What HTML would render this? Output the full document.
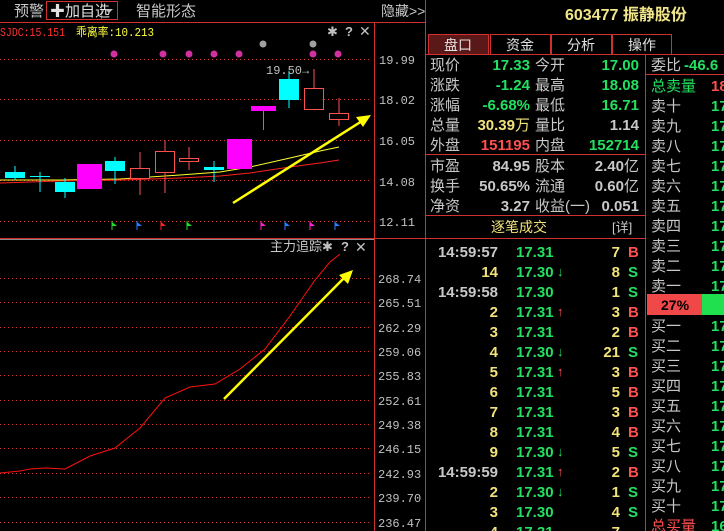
<!DOCTYPE html>
<html><head><meta charset="utf-8"><style>
html,body{margin:0;padding:0;background:#000;width:724px;height:531px;overflow:hidden}
svg{display:block}
text{font-family:"Liberation Sans","Noto Sans CJK SC",sans-serif}
.cn{font-family:"Liberation Sans","Noto Sans CJK SC",sans-serif;font-size:15px;fill:#c8c8c8}
.n{font-family:"Liberation Sans",sans-serif;font-weight:bold;font-size:15px}
.ax{font-family:"Liberation Mono",monospace;font-size:12px;fill:#c0c0c0}
.g{fill:#22e060}.y{fill:#f2e27a}.r{fill:#ff5050}.w{fill:#c8c8c8}
</style></head><body>
<svg width="724" height="531" viewBox="0 0 724 531" xmlns="http://www.w3.org/2000/svg">
<text x="14" y="16" class="cn">预警</text>
<rect x="46.5" y="1.5" width="71" height="18" fill="none" stroke="#d03030"/>
<line x1="101.5" y1="1" x2="101.5" y2="19" stroke="#d03030"/>
<text x="50" y="16" class="cn" style="fill:#e0e0e0">✚加自选</text>
<polygon points="105,9 113,9 109,13" fill="#c0c0c0"/>
<text x="136" y="16" class="cn">智能形态</text>
<text x="381" y="16" class="cn" style="font-size:14px">隐藏&gt;&gt;</text>
<line x1="0" y1="22.5" x2="425" y2="22.5" stroke="#d03030"/>
<line x1="374.5" y1="22" x2="374.5" y2="531" stroke="#d03030"/>
<line x1="0" y1="238.5" x2="374" y2="238.5" stroke="#d03030"/>
<line x1="0" y1="239.5" x2="374" y2="239.5" stroke="#888"/>
<line x1="375" y1="238.5" x2="425" y2="238.5" stroke="#d03030"/>
<text x="0" y="36" textLength="65" lengthAdjust="spacingAndGlyphs" style="font-family:'Liberation Mono',monospace;font-size:12px;fill:#ff3030">SJDC:15.151</text>
<text x="76" y="36" textLength="78" lengthAdjust="spacingAndGlyphs" style="font-family:'Liberation Mono','Noto Sans CJK SC',monospace;font-size:12px;fill:#ffff40">乖离率:10.213</text>
<text x="327" y="36" style="font-size:13px;fill:#c0c0c0">✱</text>
<text x="345" y="36" style="font-size:13px;font-weight:bold;fill:#c0c0c0">?</text>
<text x="359" y="36" style="font-size:14px;fill:#c0c0c0">✕</text>
<g stroke="#e03030" stroke-dasharray="1,3">
<line x1="0" y1="59.5" x2="372" y2="59.5"/><line x1="0" y1="99.5" x2="372" y2="99.5"/><line x1="0" y1="140.5" x2="372" y2="140.5"/><line x1="0" y1="180.5" x2="372" y2="180.5"/><line x1="0" y1="221.5" x2="372" y2="221.5"/>
</g>
<text x="379" y="64" class="ax">19.99</text><text x="379" y="104" class="ax">18.02</text><text x="379" y="145" class="ax">16.05</text><text x="379" y="186" class="ax">14.08</text><text x="379" y="226" class="ax">12.11</text>
<g fill="#d030a0"><circle cx="114" cy="54" r="3.5"/><circle cx="163" cy="54" r="3.5"/><circle cx="189" cy="54" r="3.5"/><circle cx="214" cy="54" r="3.5"/><circle cx="239" cy="54" r="3.5"/><circle cx="313" cy="54" r="3.5"/><circle cx="338" cy="54" r="3.5"/></g>
<g fill="#a0a0a0"><circle cx="263" cy="44" r="3.5"/><circle cx="313" cy="44" r="3.5"/></g>
<polyline points="0,180 60,180 120,179 180,175 220,172 250,167 290,158 320,151 339,147" fill="none" stroke="#ffff30" stroke-width="1"/>
<polyline points="0,183 60,181 120,180 180,178 220,176 250,173 290,167 320,163 339,160" fill="none" stroke="#ff2020" stroke-width="1"/>
<g stroke="#00ffff"><line x1="15" y1="166" x2="15" y2="180"/><line x1="40" y1="172" x2="40" y2="192"/><line x1="30" y1="176.5" x2="50" y2="176.5"/><line x1="65" y1="178" x2="65" y2="198"/><line x1="115" y1="157" x2="115" y2="184"/><line x1="214" y1="161" x2="214" y2="182"/><line x1="289" y1="71" x2="289" y2="108"/></g>
<g fill="#00ffff"><rect x="5" y="172" width="20" height="6"/><rect x="55" y="182" width="20" height="10"/><rect x="105" y="161" width="20" height="10"/><rect x="204" y="167" width="20" height="3"/><rect x="279" y="79" width="20" height="21"/></g>
<g fill="#ff00ff"><rect x="77" y="164" width="25" height="25"/><rect x="227" y="139" width="25" height="30"/><rect x="251" y="106" width="25" height="5"/></g>
<line x1="263.5" y1="111" x2="263.5" y2="130" stroke="#ff5050"/>
<g stroke="#ff5050" fill="none"><line x1="140" y1="152" x2="140" y2="195"/><rect x="130.5" y="168.5" width="19" height="10" fill="#000"/>
<line x1="165" y1="140" x2="165" y2="193"/><rect x="155.5" y="151.5" width="19" height="21" fill="#000"/>
<line x1="189" y1="147" x2="189" y2="170"/><rect x="179.5" y="158.5" width="19" height="3" fill="#000"/>
<line x1="314" y1="69" x2="314" y2="110"/><rect x="304.5" y="88.5" width="19" height="21" fill="#000"/>
<line x1="339" y1="98" x2="339" y2="126"/><rect x="329.5" y="113.5" width="19" height="6" fill="#000"/></g>
<text x="266" y="74" class="ax" style="font-size:12px">19.50→</text>
<line x1="233" y1="203" x2="362" y2="121" stroke="#ffff00" stroke-width="2.5"/>
<polygon points="371,115 356,117 363,127" fill="#ffff00"/>
<g><polygon points="112,222 117,226 112,226" fill="#20e020"/><polygon points="137,222 142,226 137,226" fill="#2080ff"/><polygon points="161,222 166,226 161,226" fill="#ff2020"/><polygon points="187,222 192,226 187,226" fill="#20e020"/><polygon points="261,222 266,226 261,226" fill="#ff20d0"/><polygon points="285,222 290,226 285,226" fill="#2080ff"/><polygon points="310,222 315,226 310,226" fill="#ff20d0"/><polygon points="335,222 340,226 335,226" fill="#2080ff"/></g>
<g stroke-width="1"><line x1="112" y1="221" x2="112" y2="230" stroke="#20e020"/><line x1="137" y1="221" x2="137" y2="230" stroke="#2080ff"/><line x1="161" y1="221" x2="161" y2="230" stroke="#ff2020"/><line x1="187" y1="221" x2="187" y2="230" stroke="#20e020"/><line x1="261" y1="221" x2="261" y2="230" stroke="#ff20d0"/><line x1="285" y1="221" x2="285" y2="230" stroke="#2080ff"/><line x1="310" y1="221" x2="310" y2="230" stroke="#ff20d0"/><line x1="335" y1="221" x2="335" y2="230" stroke="#2080ff"/></g>
<text x="270" y="251" class="cn" style="font-size:13px">主力追踪</text>
<text x="322" y="251" style="font-size:13px;fill:#c0c0c0">✱</text>
<text x="341" y="251" style="font-size:13px;font-weight:bold;fill:#c0c0c0">?</text>
<text x="355" y="252" style="font-size:14px;fill:#c0c0c0">✕</text>
<g stroke="#e03030" stroke-dasharray="1,3">
<line x1="0" y1="278.5" x2="372" y2="278.5"/><line x1="0" y1="302.5" x2="372" y2="302.5"/><line x1="0" y1="327.5" x2="372" y2="327.5"/><line x1="0" y1="351.5" x2="372" y2="351.5"/><line x1="0" y1="375.5" x2="372" y2="375.5"/><line x1="0" y1="400.5" x2="372" y2="400.5"/><line x1="0" y1="424.5" x2="372" y2="424.5"/><line x1="0" y1="448.5" x2="372" y2="448.5"/><line x1="0" y1="473.5" x2="372" y2="473.5"/><line x1="0" y1="497.5" x2="372" y2="497.5"/><line x1="0" y1="522.5" x2="372" y2="522.5"/>
</g>
<g><text x="378" y="283" class="ax">268.74</text><text x="378" y="307" class="ax">265.51</text><text x="378" y="332" class="ax">262.29</text><text x="378" y="356" class="ax">259.06</text><text x="378" y="380" class="ax">255.83</text><text x="378" y="405" class="ax">252.61</text><text x="378" y="429" class="ax">249.38</text><text x="378" y="453" class="ax">246.15</text><text x="378" y="478" class="ax">242.93</text><text x="378" y="502" class="ax">239.70</text><text x="378" y="527" class="ax">236.47</text></g>
<polyline points="0,473 20,471 30,469 45,468 65,469 90,456 115,448 140,428 165,398 190,387 215,384 240,369 265,349 290,316 315,280 330,262 340,254" fill="none" stroke="#ff1010"/>
<line x1="224" y1="399" x2="345" y2="277" stroke="#ffff00" stroke-width="2.5"/>
<polygon points="353,270 339,275 348,284" fill="#ffff00"/>
<line x1="425.5" y1="0" x2="425.5" y2="531" stroke="#d03030"/>
<text x="565" y="20" class="n" style="fill:#f2e68a;font-size:16px">603477 <tspan style="font-family:'Noto Sans CJK SC',sans-serif;font-weight:bold">振静股份</tspan></text>
<rect x="428.5" y="34.5" width="60" height="20" fill="#5a1818" stroke="#d03030"/>
<rect x="490.5" y="34.5" width="60" height="20" fill="#000" stroke="#d03030"/>
<rect x="551.5" y="34.5" width="60" height="20" fill="#000" stroke="#d03030"/>
<rect x="612.5" y="34.5" width="59" height="20" fill="#000" stroke="#d03030"/>
<g class="cn" style="font-size:14px;fill:#e0e0e0"><text x="444" y="50">盘口</text><text x="506" y="50">资金</text><text x="567" y="50">分析</text><text x="628" y="50">操作</text></g>
<line x1="425" y1="54.5" x2="724" y2="54.5" stroke="#d03030"/>
<line x1="645.5" y1="54" x2="645.5" y2="531" stroke="#d03030"/>
<line x1="425" y1="154.5" x2="645" y2="154.5" stroke="#d03030"/>
<line x1="425" y1="215.5" x2="645" y2="215.5" stroke="#d03030"/>
<line x1="425" y1="238.5" x2="645" y2="238.5" stroke="#d03030"/>
<line x1="645" y1="74.5" x2="724" y2="74.5" stroke="#d03030"/>
<g class="cn">
<text x="430" y="70">现价</text><text x="430" y="90">涨跌</text><text x="430" y="110">涨幅</text><text x="430" y="130">总量</text><text x="430" y="150">外盘</text>
<text x="535" y="70">今开</text><text x="535" y="90">最高</text><text x="535" y="110">最低</text><text x="535" y="130">量比</text><text x="535" y="150">内盘</text>
<text x="430" y="171">市盈</text><text x="430" y="191">换手</text><text x="430" y="211">净资</text>
<text x="535" y="171">股本</text><text x="535" y="191">流通</text><text x="535" y="211">收益(一)</text>
</g>
<g class="n" text-anchor="end">
<text x="530" y="70" class="n g">17.33</text><text x="530" y="90" class="n g">-1.24</text><text x="530" y="110" class="n g">-6.68%</text><text x="530" y="130" class="n y">30.39<tspan style="font-weight:normal;font-family:'Noto Sans CJK SC'">万</tspan></text><text x="530" y="150" class="n r">151195</text>
<text x="639" y="70" class="n g">17.00</text><text x="639" y="90" class="n g">18.08</text><text x="639" y="110" class="n g">16.71</text><text x="639" y="130" class="n w">1.14</text><text x="639" y="150" class="n g">152714</text>
<text x="530" y="171" class="n w">84.95</text><text x="530" y="191" class="n w">50.65%</text><text x="530" y="211" class="n w">3.27</text>
<text x="639" y="171" class="n w">2.40<tspan style="font-weight:normal;font-family:'Noto Sans CJK SC'">亿</tspan></text><text x="639" y="191" class="n w">0.60<tspan style="font-weight:normal;font-family:'Noto Sans CJK SC'">亿</tspan></text><text x="639" y="211" class="n w">0.051</text>
</g>
<text x="491" y="232" class="cn" style="fill:#f2e27a;font-size:14px">逐笔成交</text>
<text x="612" y="232" class="cn" style="font-size:13px">[详]</text>
<g text-anchor="end" class="n">
<text x="498" y="257" class="n w">14:59:57</text><text x="498" y="277" class="n y">14</text><text x="498" y="297" class="n w">14:59:58</text><text x="498" y="317" class="n y">2</text><text x="498" y="337" class="n y">3</text><text x="498" y="357" class="n y">4</text><text x="498" y="377" class="n y">5</text><text x="498" y="397" class="n y">6</text><text x="498" y="417" class="n y">7</text><text x="498" y="437" class="n y">8</text><text x="498" y="457" class="n y">9</text><text x="498" y="477" class="n w">14:59:59</text><text x="498" y="497" class="n y">2</text><text x="498" y="517" class="n y">3</text><text x="498" y="537" class="n y">4</text>
<text x="620" y="257" class="n y">7</text><text x="620" y="277" class="n y">8</text><text x="620" y="297" class="n y">1</text><text x="620" y="317" class="n y">3</text><text x="620" y="337" class="n y">2</text><text x="620" y="357" class="n y">21</text><text x="620" y="377" class="n y">3</text><text x="620" y="397" class="n y">5</text><text x="620" y="417" class="n y">3</text><text x="620" y="437" class="n y">4</text><text x="620" y="457" class="n y">5</text><text x="620" y="477" class="n y">2</text><text x="620" y="497" class="n y">1</text><text x="620" y="517" class="n y">4</text><text x="620" y="537" class="n y">7</text>
</g>
<g class="n g">
<text x="516" y="257">17.31</text><text x="516" y="277">17.30</text><text x="516" y="297">17.30</text><text x="516" y="317">17.31</text><text x="516" y="337">17.31</text><text x="516" y="357">17.30</text><text x="516" y="377">17.31</text><text x="516" y="397">17.31</text><text x="516" y="417">17.31</text><text x="516" y="437">17.31</text><text x="516" y="457">17.30</text><text x="516" y="477">17.31</text><text x="516" y="497">17.30</text><text x="516" y="517">17.30</text><text x="516" y="537">17.31</text>
</g>
<g class="n">
<text x="628" y="257" class="r">B</text><text x="628" y="277" class="g">S</text><text x="628" y="297" class="g">S</text><text x="628" y="317" class="r">B</text><text x="628" y="337" class="r">B</text><text x="628" y="357" class="g">S</text><text x="628" y="377" class="r">B</text><text x="628" y="397" class="r">B</text><text x="628" y="417" class="r">B</text><text x="628" y="437" class="r">B</text><text x="628" y="457" class="g">S</text><text x="628" y="477" class="r">B</text><text x="628" y="497" class="g">S</text><text x="628" y="517" class="g">S</text>
</g>
<g font-size="13" font-weight="bold">
<text x="557" y="276" class="g">↓</text><text x="557" y="316" class="r">↑</text><text x="557" y="356" class="g">↓</text><text x="557" y="376" class="r">↑</text><text x="557" y="456" class="g">↓</text><text x="557" y="476" class="r">↑</text><text x="557" y="496" class="g">↓</text>
</g>
<text x="651" y="70" class="cn">委比</text><text x="684" y="70" class="n g">-46.6</text>
<text x="651" y="91" class="cn" style="fill:#22e060">总卖量</text><text x="711" y="91" class="n r">18</text>
<g class="cn"><text x="651" y="111">卖十</text><text x="651" y="131">卖九</text><text x="651" y="151">卖八</text><text x="651" y="171">卖七</text><text x="651" y="191">卖六</text><text x="651" y="211">卖五</text><text x="651" y="231">卖四</text><text x="651" y="251">卖三</text><text x="651" y="271">卖二</text><text x="651" y="291">卖一</text>
<text x="651" y="331">买一</text><text x="651" y="351">买二</text><text x="651" y="371">买三</text><text x="651" y="391">买四</text><text x="651" y="411">买五</text><text x="651" y="431">买六</text><text x="651" y="451">买七</text><text x="651" y="471">买八</text><text x="651" y="491">买九</text><text x="651" y="511">买十</text></g>
<text x="651" y="531" class="cn" style="fill:#ff5050">总买量</text><text x="711" y="531" class="n g">16</text>
<g class="n g"><text x="711" y="111">17</text><text x="711" y="131">17</text><text x="711" y="151">17</text><text x="711" y="171">17</text><text x="711" y="191">17</text><text x="711" y="211">17</text><text x="711" y="231">17</text><text x="711" y="251">17</text><text x="711" y="271">17</text><text x="711" y="291">17</text>
<text x="711" y="331">17</text><text x="711" y="351">17</text><text x="711" y="371">17</text><text x="711" y="391">17</text><text x="711" y="411">17</text><text x="711" y="431">17</text><text x="711" y="451">17</text><text x="711" y="471">17</text><text x="711" y="491">17</text><text x="711" y="511">17</text></g>
<rect x="647" y="294" width="55" height="21" fill="#f04848"/>
<rect x="702" y="294" width="22" height="21" fill="#20e050"/>
<text x="661" y="310" class="n" style="fill:#000;font-size:14px">27%</text>
</svg>
</body></html>
